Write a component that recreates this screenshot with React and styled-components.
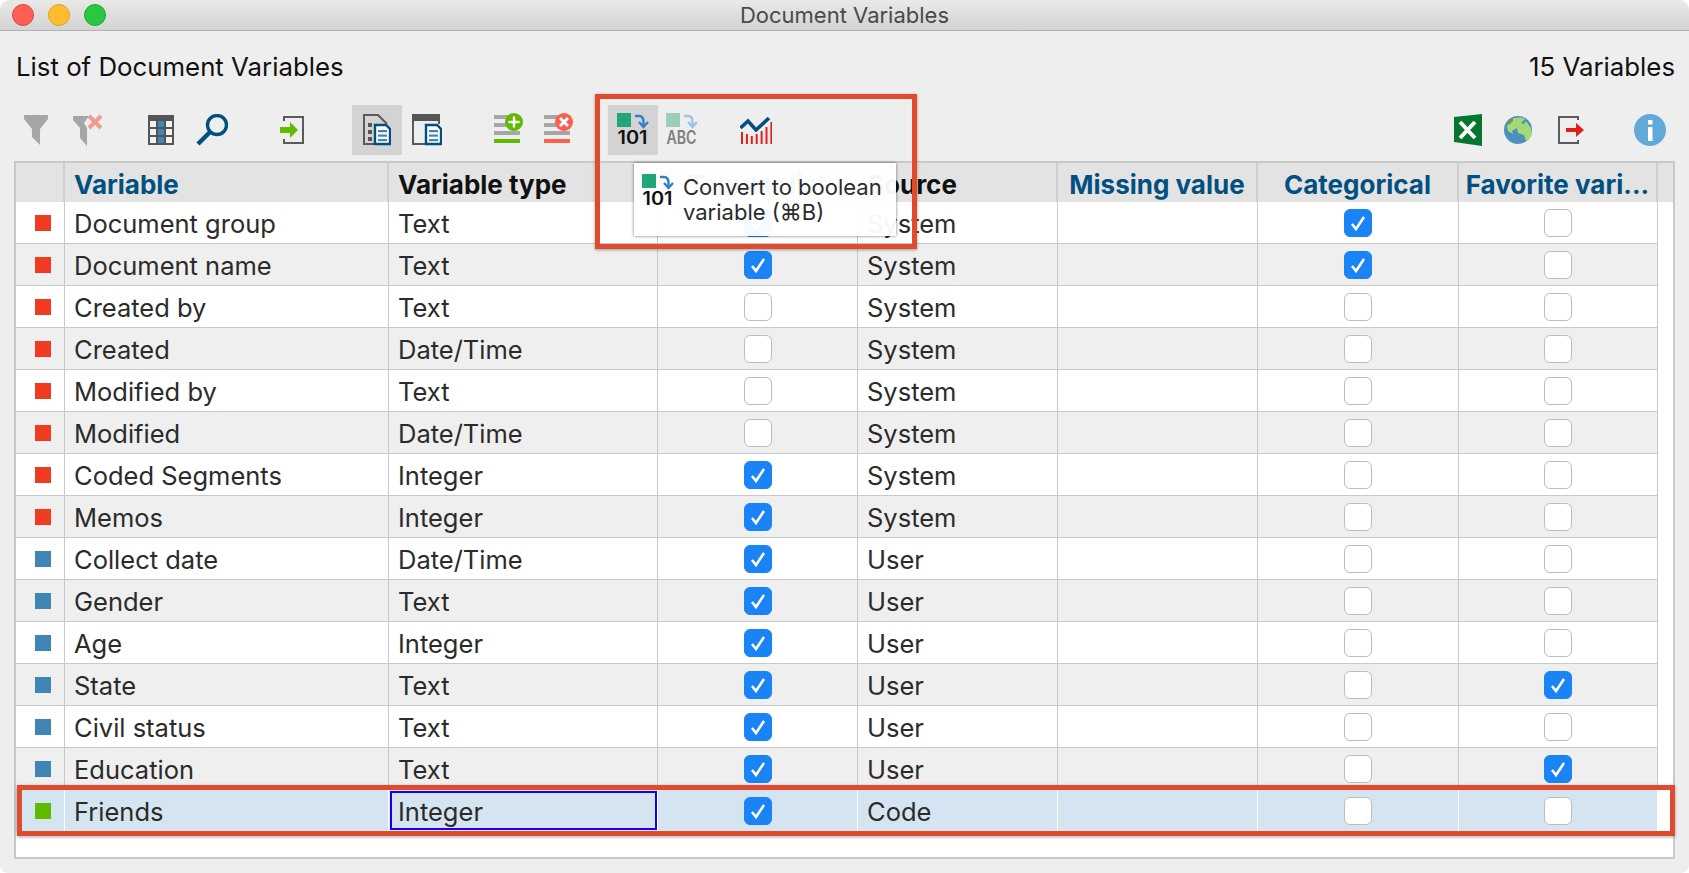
import styled, { createGlobalStyle } from "styled-components";

const rows = [
  { name: "Document group", type: "Text", tone: "system", listed: true, source: "System", cat: true },
  { name: "Document name", type: "Text", tone: "system", listed: true, source: "System", cat: true },
  { name: "Created by", type: "Text", tone: "system", source: "System" },
  { name: "Created", type: "Date/Time", tone: "system", source: "System" },
  { name: "Modified by", type: "Text", tone: "system", source: "System" },
  { name: "Modified", type: "Date/Time", tone: "system", source: "System" },
  { name: "Coded Segments", type: "Integer", tone: "system", listed: true, source: "System" },
  { name: "Memos", type: "Integer", tone: "system", listed: true, source: "System" },
  { name: "Collect date", type: "Date/Time", tone: "user", listed: true, source: "User" },
  { name: "Gender", type: "Text", tone: "user", listed: true, source: "User" },
  { name: "Age", type: "Integer", tone: "user", listed: true, source: "User" },
  { name: "State", type: "Text", tone: "user", listed: true, source: "User", fav: true },
  { name: "Civil status", type: "Text", tone: "user", listed: true, source: "User" },
  { name: "Education", type: "Text", tone: "user", listed: true, source: "User", fav: true },
  { name: "Friends", type: "Integer", tone: "code", listed: true, source: "Code", selected: true },
];

const toneColors = { system: "#f03a22", user: "#3f86b6", code: "#60ba00" };

function FilterIcon() {
  return (
    <svg width="24" height="30" viewBox="0 0 24 30">
      <path d="M0 0h24v4l-8 10v16l-8-8V14L0 4z" fill="#a6a6a6" />
    </svg>
  );
}

function FilterClearIcon() {
  return (
    <svg width="30" height="32" viewBox="0 0 30 32">
      <path d="M0 2h16l-5 7 3 5v18l-7-8V14L0 6z" fill="#a6a6a6" />
      <path d="M16 2l12 12M28 2L16 14" stroke="#f29a92" strokeWidth="4" />
    </svg>
  );
}

function ColumnsIcon() {
  return (
    <svg width="26" height="30" viewBox="0 0 26 30">
      <rect width="26" height="30" fill="#555" />
      {[6, 14, 22].map((y) =>
        [2, 10, 18].map((x) => (
          <rect key={`${x}-${y}`} x={x} y={y} width="6" height="6" fill={x === 10 ? "#3f86b6" : "#f2f2f2"} />
        ))
      )}
    </svg>
  );
}

function SearchIcon() {
  return (
    <svg width="32" height="32" viewBox="0 0 32 32">
      <circle cx="21" cy="11" r="9.500" fill="none" stroke="#02507f" strokeWidth="3.400" />
      <path d="M13.500 18.500L2 30" stroke="#02507f" strokeWidth="4.400" />
    </svg>
  );
}

function ImportIcon() {
  return (
    <svg width="24" height="28" viewBox="0 0 24 28">
      <path d="M4 5V1h19v26H4v-4" fill="none" stroke="#5a5a5a" strokeWidth="2" />
      <path d="M0 11h10V6l8 8-8 8v-5H0z" fill="#60ba00" />
    </svg>
  );
}

function SheetBadge({ x, y }) {
  return (
    <g transform={`translate(${x} ${y})`}>
      <path d="M1 1h11l4 4v15H1z" fill="#fff" stroke="#02507f" strokeWidth="2.400" />
      {[6, 10.500, 15].map((ly) => (
        <rect key={ly} x="4" y={ly} width="9" height="2.200" fill="#3f86b6" />
      ))}
    </g>
  );
}

function DocListIcon() {
  return (
    <svg width="28" height="32" viewBox="0 0 28 32">
      <path d="M1 30V1h14l9 9" fill="none" stroke="#5a5a5a" strokeWidth="2" />
      <path d="M0 30h12" stroke="#5a5a5a" strokeWidth="2" />
      {[9, 16, 23].map((y) => (
        <rect key={y} x="5" y={y} width="4" height="4" fill="#555" />
      ))}
      <SheetBadge x="11" y="10" />
    </svg>
  );
}

function DocPanelIcon() {
  return (
    <svg width="30" height="32" viewBox="0 0 30 32">
      <path d="M1 30V3h26v7" fill="none" stroke="#5a5a5a" strokeWidth="2" />
      <rect width="28" height="7" fill="#555" />
      <path d="M0 30h13" stroke="#5a5a5a" strokeWidth="2" />
      <SheetBadge x="13" y="10" />
    </svg>
  );
}

function ListBadgeIcon({ accent, mark }) {
  return (
    <svg width="30" height="30" viewBox="0 2 30 30" overflow="visible">
      {[2, 10, 18].map((y) => (
        <rect key={y} x="0" y={y} width="26" height="4" fill="#a6a6a6" />
      ))}
      <rect x="0" y="26" width="26" height="4" fill={accent} />
      <circle cx="20" cy="9" r="9" fill={accent} />
      {mark === "plus" ? (
        <path d="M20 3.500v11M14.500 9h11" stroke="#fff" strokeWidth="2.400" />
      ) : (
        <path d="M16 5l8 8M24 5l-8 8" stroke="#fff" strokeWidth="3" />
      )}
    </svg>
  );
}

function ConvertIcon({ label, muted }) {
  return (
    <svg width="32" height="32" viewBox="0 1 32 32" overflow="visible">
      <rect x="0" y="0" width="14" height="14" fill={muted ? "#9bcdb8" : "#20a67a"} />
      <g fill="none" stroke={muted ? "#9cc4e6" : "#2f80c8"} strokeWidth="2.400">
        <path d="M18 3h4c4 0 4.500 3 4.500 6v4" />
        <path d="M22 9l4.500 5 4.500-5" />
      </g>
      <ConvertText x="0.500" y="31" textLength="30" lengthAdjust="spacingAndGlyphs" $muted={muted}>
        {label}
      </ConvertText>
    </svg>
  );
}

function ChartIcon() {
  const bars = [16, 18, 20, 18, 15, 11, 6];
  return (
    <svg width="32" height="28" viewBox="0 0 32 28">
      {bars.map((top, i) => (
        <rect key={i} x={1 + i * 4.900} y={top} width="2" height={28 - top} fill="#e0201c" />
      ))}
      <path d="M0.500 12L8 5l8 9L29 2" fill="none" stroke="#02507f" strokeWidth="3.600" />
    </svg>
  );
}

function ExcelIcon() {
  return (
    <svg width="28" height="32" viewBox="0 0 28 32">
      <path d="M0 3L28 0v32L0 28z" fill="#05762e" />
      <path d="M6 8l15 16M21 8L6 24" stroke="#fff" strokeWidth="4" />
    </svg>
  );
}

function GlobeIcon() {
  return (
    <svg width="28" height="28" viewBox="0 0 28 28">
      <circle cx="14" cy="14" r="14" fill="#4d8fbd" />
      <path d="M6 4c5-3 11-3 15-1l-4 4 3 1 2-3 5 7 1 6-3 5-3 2-2-6-6-2-1-5-5 3 1 3-5-3-1-5z" fill="#a3d977" />
      <path d="M9 2c-3 1-6 4-7 7l4-1 3-3z" fill="#7d8f5a" />
    </svg>
  );
}

function ExportIcon() {
  return (
    <svg width="26" height="28" viewBox="0 0 26 28">
      <path d="M20 4V1H1v26h19v-3" fill="none" stroke="#5a5a5a" strokeWidth="2" />
      <path d="M8 12h10V7l8 7-8 7v-5H8z" fill="#e0201c" />
    </svg>
  );
}

function InfoIcon() {
  return (
    <svg width="32" height="32" viewBox="0 0 32 32">
      <circle cx="16" cy="16" r="16" fill="#62a8d8" />
      <rect x="14" y="6" width="4.500" height="4.500" fill="#fff" />
      <rect x="14" y="13" width="4.500" height="14" fill="#fff" />
    </svg>
  );
}

function Check({ on }) {
  return (
    <CheckBox $on={on}>
      {on && (
        <svg width="20" height="20" viewBox="0 0 20 20">
          <path d="M4 11l4 5 8-12" fill="none" stroke="#fff" strokeWidth="2.600" />
        </svg>
      )}
    </CheckBox>
  );
}

export default function App() {
  return (
    <>
      <GlobalStyle />
      <Window>
        <TitleBar>
          <Lights>
            <Light $color="#fd5f57" $edge="#e0443e" />
            <Light $color="#febc2e" $edge="#dea123" />
            <Light $color="#28c840" $edge="#1aab29" />
          </Lights>
          Document Variables
        </TitleBar>
        <Heading>
          <span>List of Document Variables</span>
          <span>15 Variables</span>
        </Heading>
        <Toolbar>
          <ToolButton><FilterIcon /></ToolButton>
          <ToolButton $left={2}><FilterClearIcon /></ToolButton>
          <ToolButton $left={23}><ColumnsIcon /></ToolButton>
          <ToolButton $left={1}><SearchIcon /></ToolButton>
          <ToolButton $left={30}><ImportIcon /></ToolButton>
          <ToolButton $left={35} $active><DocListIcon /></ToolButton>
          <ToolButton><DocPanelIcon /></ToolButton>
          <ToolButton $left={32}><ListBadgeIcon accent="#60ba00" mark="plus" /></ToolButton>
          <ToolButton><ListBadgeIcon accent="#fd5f4f" mark="cross" /></ToolButton>
          <ToolButton $left={24} $active><ConvertIcon label="101" /></ToolButton>
          <ToolButton $left={-1}><ConvertIcon label="ABC" muted /></ToolButton>
          <ToolButton $left={24}><ChartIcon /></ToolButton>
          <ToolSpacer />
          <ToolButton><ExcelIcon /></ToolButton>
          <ToolButton><GlobeIcon /></ToolButton>
          <ToolButton $left={3}><ExportIcon /></ToolButton>
          <ToolButton $left={29}><InfoIcon /></ToolButton>
        </Toolbar>
        <TableFrame>
          <HeaderRow>
            <HeadCell />
            <HeadCell $color="#02507f">Variable</HeadCell>
            <HeadCell>Variable type</HeadCell>
            <HeadCell $color="#02507f" $center>Tabular list</HeadCell>
            <HeadCell>Source</HeadCell>
            <HeadCell $color="#02507f" $center>Missing value</HeadCell>
            <HeadCell $color="#02507f" $center>Categorical</HeadCell>
            <HeadCell $color="#02507f" $center>Favorite vari...</HeadCell>
          </HeaderRow>
          {rows.map((row, index) => (
            <Row key={row.name} $shade={index % 2 === 1} $selected={row.selected}>
              <Cell $center>
                <Swatch $color={toneColors[row.tone]} />
              </Cell>
              <Cell>{row.name}</Cell>
              <Cell $focused={row.selected}>{row.type}</Cell>
              <Cell $center>
                <Check on={row.listed} />
              </Cell>
              <Cell>{row.source}</Cell>
              <Cell />
              <Cell $center>
                <Check on={row.cat} />
              </Cell>
              <Cell $center>
                <Check on={row.fav} />
              </Cell>
            </Row>
          ))}
        </TableFrame>
        <Tooltip>
          <TooltipIcon>
            <ConvertIcon label="101" />
          </TooltipIcon>
          <span>
            Convert to boolean
            <br />
            variable (⌘B)
          </span>
        </Tooltip>
        <ToolbarCallout />
        <RowCallout />
      </Window>
    </>
  );
}

const GlobalStyle = createGlobalStyle`
  html, body {
    margin: 0;
    background: #fff;
  }

  body {
    font-family: Inter, "Liberation Sans", sans-serif;
    color: #111;
  }
`;

const Window = styled.div`
  position: relative;
  width: 1689px;
  height: 873px;
  box-sizing: border-box;
  background: #eeeeee;
  border-radius: 10px 10px 8px 8px;
  overflow: hidden;
`;

const TitleBar = styled.div`
  position: relative;
  height: 30px;
  display: flex;
  align-items: center;
  justify-content: center;
  background: linear-gradient(#e9e9e9, #d3d3d3);
  border-bottom: 1px solid #b1b1b1;
  font-size: 22px;
  color: #4a4a4a;
`;

const Lights = styled.div`
  position: absolute;
  left: 12px;
  top: 4px;
  display: flex;
  gap: 14px;
`;

const Light = styled.span`
  width: 22px;
  height: 22px;
  border-radius: 50%;
  background: ${({ $color }) => $color};
  border: 1px solid ${({ $edge }) => $edge};
  box-sizing: border-box;
`;

const Heading = styled.div`
  height: 32px;
  margin-top: 19px;
  padding: 0 14px 0 16px;
  display: flex;
  align-items: center;
  justify-content: space-between;
  font-size: 25.800px;
  color: #111;
`;

const Toolbar = styled.div`
  height: 50px;
  margin-top: 23px;
  padding-left: 11px;
  padding-right: 14px;
  display: flex;
`;

const ToolButton = styled.div`
  flex: none;
  width: 50px;
  height: 50px;
  margin-left: ${({ $left }) => $left || 0}px;
  display: flex;
  align-items: center;
  justify-content: center;
  background: ${({ $active }) => ($active ? "#d3d3d3" : "transparent")};
`;

const ToolSpacer = styled.div`
  flex: 1;
`;

const ConvertText = styled.text`
  font-family: Inter, "Liberation Sans", sans-serif;
  font-weight: 600;
  font-size: 18px;
  fill: ${({ $muted }) => ($muted ? "#808080" : "#111")};
`;

const TableFrame = styled.div`
  margin: 6px 14px 0;
  height: 698px;
  box-sizing: border-box;
  background: #fff;
  border: 2px solid #c9c9c9;
`;

const columns = "49px 324px 269px 200px 200px 200px 201px 199px";

const HeaderRow = styled.div`
  display: grid;
  grid-template-columns: ${columns} 1fr;
  height: 39px;
  background: #e3e3e3;
`;

const HeadCell = styled.div`
  display: flex;
  align-items: center;
  justify-content: ${({ $center }) => ($center ? "center" : "flex-start")};
  padding: 4px 9px 0;
  border-right: 2px solid #cfcfcf;
  font-size: 26px;
  font-weight: 700;
  color: ${({ $color }) => $color || "#111"};
  overflow: hidden;
  white-space: nowrap;
`;

const Row = styled.div`
  display: grid;
  grid-template-columns: ${columns};
  width: 1642px;
  height: 42px;
  box-sizing: border-box;
  background: ${({ $selected, $shade }) => ($selected ? "#d4e4f1" : $shade ? "#efefef" : "#fff")};
  border-bottom: 1px solid ${({ $selected }) => ($selected ? "#d4e4f1" : "#c9c9c9")};
  --line: ${({ $selected }) => ($selected ? "#fff" : "#c9c9c9")};
`;

const Cell = styled.div`
  display: flex;
  align-items: center;
  justify-content: ${({ $center }) => ($center ? "center" : "flex-start")};
  padding: ${({ $center }) => ($center ? "0" : "2px 9px 0")};
  box-sizing: border-box;
  border-right: 1px solid var(--line);
  font-size: 25.500px;
  color: #2b2b2b;
  white-space: nowrap;
  outline: ${({ $focused }) => ($focused ? "2px solid #1a00ee" : "none")};
  outline-offset: -3px;
`;

const Swatch = styled.span`
  width: 16px;
  height: 16px;
  margin-left: 5px;
  background: ${({ $color }) => $color};
`;

const CheckBox = styled.span`
  width: 28px;
  height: 28px;
  box-sizing: border-box;
  border-radius: 6px;
  display: flex;
  align-items: center;
  justify-content: center;
  background: ${({ $on }) => ($on ? "#1a84f7" : "#fff")};
  border: 1px solid ${({ $on }) => ($on ? "#1a84f7" : "#bdbdbd")};
`;

const Tooltip = styled.div`
  position: absolute;
  left: 634px;
  top: 163px;
  width: 262px;
  height: 73px;
  box-sizing: border-box;
  padding: 0 8px;
  display: flex;
  align-items: center;
  gap: 9px;
  background: rgba(255, 255, 255, 0.96);
  box-shadow: 0 0 3px rgba(0, 0, 0, 0.55);
  font-size: 22px;
  line-height: 25px;
  color: #2b2b2b;
`;

const TooltipIcon = styled.div`
  align-self: flex-start;
  margin-top: 12px;
  height: 32px;
`;

const ToolbarCallout = styled.div`
  position: absolute;
  left: 595px;
  top: 94px;
  width: 322px;
  height: 155px;
  box-sizing: border-box;
  border: 5px solid #e04b2e;
  box-shadow: 0 1px 3px rgba(0, 0, 0, 0.35);
`;

const RowCallout = styled.div`
  position: absolute;
  left: 17px;
  top: 785px;
  width: 1658px;
  height: 51px;
  box-sizing: border-box;
  border: 5px solid #e04b2e;
  box-shadow: 0 1px 3px rgba(0, 0, 0, 0.35);
`;
